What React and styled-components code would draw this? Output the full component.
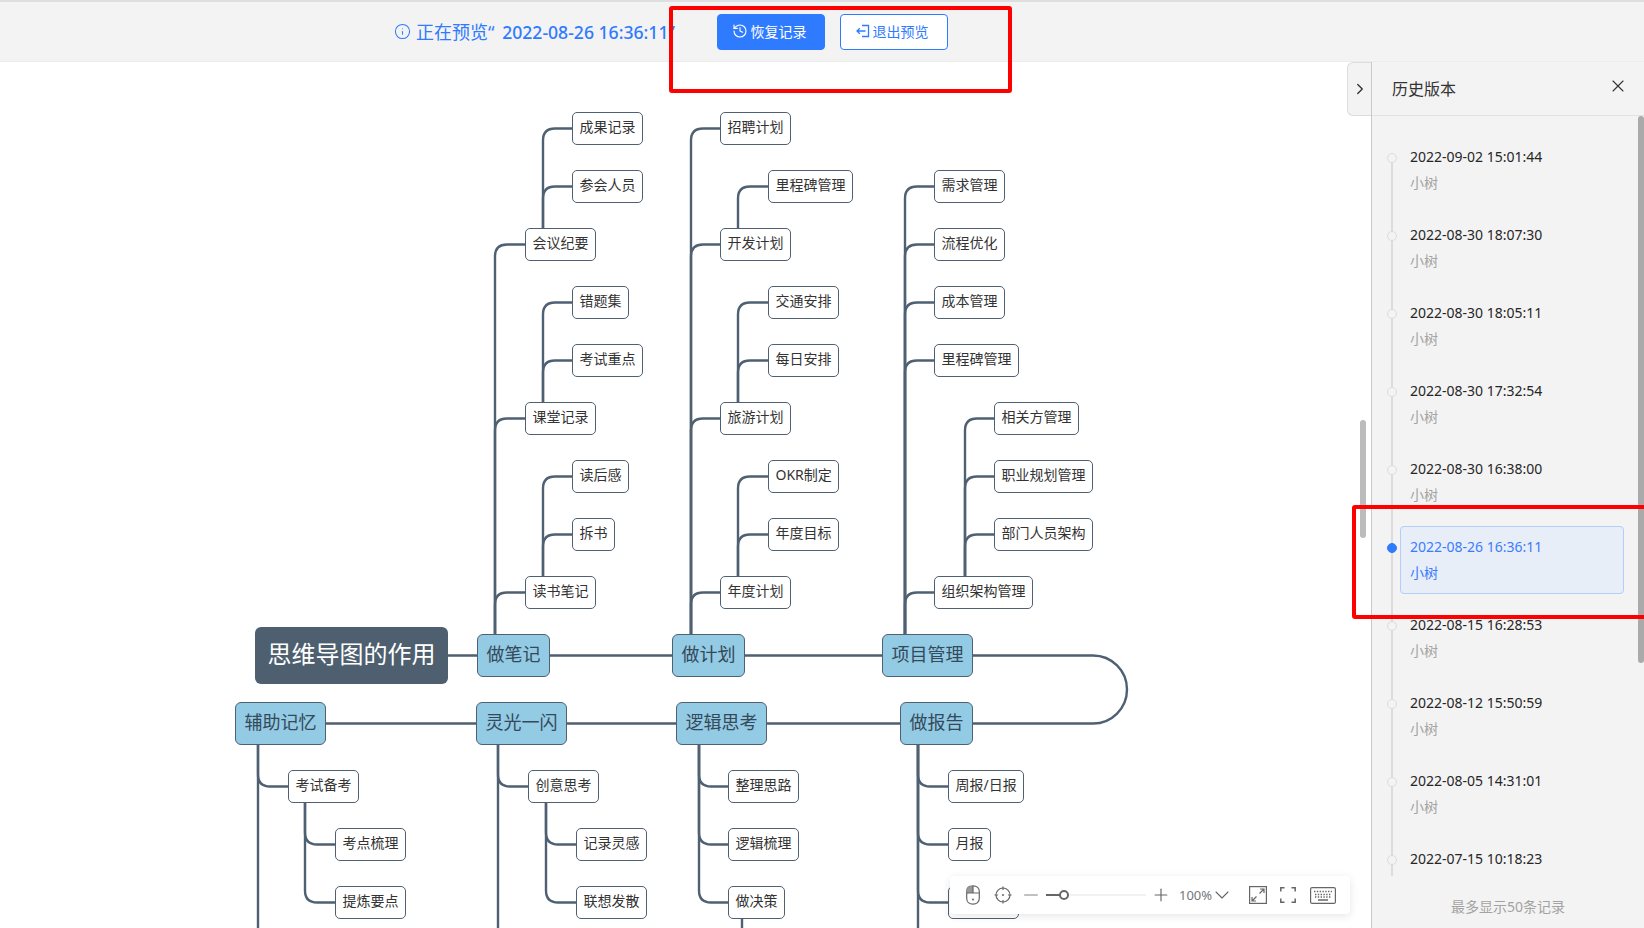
import React from "react";
import styled, { createGlobalStyle } from "styled-components";
import { ChevronDown, ChevronRight, History, Info, Minus, Plus, X } from "lucide-react";

const TOP = 62;
const LINE = "#4e6072";
const BLUE = "#2f7bff";

const GlobalStyle = createGlobalStyle`
  html, body {
    margin: 0;
    padding: 0;
    height: 100%;
    overflow: hidden;
    background: #fff;
    font-family: "Noto Sans", "Noto Sans CJK SC", sans-serif;
  }
  * {
    box-sizing: border-box;
  }
`;

const Page = styled.div`
  position: relative;
  width: 1644px;
  height: 928px;
  display: flex;
  flex-direction: column;
  overflow: hidden;
`;

const TopBar = styled.div`
  height: ${TOP}px;
  flex: none;
  display: flex;
  align-items: center;
  padding-left: 394px;
  background: #f3f3f3;
  border-top: 2px solid #dedede;
  border-bottom: 1px solid #ececec;
`;

const Notice = styled.div`
  width: 323px;
  padding-bottom: 1px;
  display: flex;
  align-items: center;
  gap: 5px;
  color: ${BLUE};
  font-size: 18px;
  white-space: nowrap;
`;

const NoticeDate = styled.span`
  margin-left: 3px;
  font-size: 17.6px;
  font-weight: 500;
`;

const Button = styled.button`
  width: 108px;
  height: 36px;
  margin-right: 15px;
  padding: 0 4px 2px 0;
  display: flex;
  align-items: center;
  justify-content: center;
  gap: 3px;
  border-radius: 4px;
  border: 1px solid ${BLUE};
  background: ${(p) => (p.$primary ? BLUE : "#fff")};
  color: ${(p) => (p.$primary ? "#fff" : BLUE)};
  font-family: inherit;
  font-size: 14px;
`;

const Body = styled.div`
  flex: 1;
  min-height: 0;
  display: flex;
`;

const Canvas = styled.div`
  position: relative;
  flex: 1;
  overflow: hidden;
  background: #fff;
`;

const Lines = styled.svg`
  position: absolute;
  left: 0;
  top: 0;
`;

const placed = (p) => ({ style: { left: p.$x, top: p.$y - TOP } });

const Topic = styled.div.attrs(placed)`
  position: absolute;
  height: 33px;
  padding: 0 6.5px 6px;
  display: flex;
  align-items: center;
  background: #fff;
  border: 1px solid ${LINE};
  border-radius: 5px;
  color: #333;
  font-size: 14px;
  white-space: nowrap;
`;

// the one topic whose label lies under the tool bar
const CoveredTopic = styled(Topic)`
  width: 71px;
`;

const MainTopic = styled.div.attrs(placed)`
  position: absolute;
  height: 43px;
  padding: 0 8.5px 6px;
  display: flex;
  align-items: center;
  background: #93cae4;
  border: 1.5px solid ${LINE};
  border-radius: 6px;
  color: #34495a;
  font-size: 18px;
  white-space: nowrap;
`;

const RootTopic = styled.div.attrs(placed)`
  position: absolute;
  height: 57px;
  padding: 0 12.5px 6px;
  display: flex;
  align-items: center;
  background: #4e5f6f;
  border-radius: 6px;
  color: #fff;
  font-size: 24px;
  white-space: nowrap;
`;

const CanvasScroll = styled.div`
  position: absolute;
  left: 1360px;
  top: ${420 - TOP}px;
  width: 6px;
  height: 118px;
  border-radius: 3px;
  background: #bcbcbc;
`;

const ToolBar = styled.div`
  position: absolute;
  left: 950px;
  bottom: 14px;
  width: 400px;
  height: 38px;
  padding-left: 16px;
  display: flex;
  align-items: center;
  background: #fff;
  border-radius: 4px;
  box-shadow: 0 2px 8px rgba(0, 0, 0, 0.1);
  color: #666;
`;

const Tool = styled.span`
  display: flex;
  align-items: center;
  margin-left: ${(p) => p.$gap || 0}px;
`;

const Zoom = styled.span`
  margin-left: 8px;
  width: 31px;
  color: #777;
  font-size: 13px;
  white-space: nowrap;
`;

const Track = styled.div`
  position: relative;
  width: 100px;
  height: 2px;
  margin-left: 4px;
  background: #f1f1f1;
`;

const TrackFill = styled.div`
  width: 18px;
  height: 2px;
  background: #666;
`;

const Knob = styled.div`
  position: absolute;
  left: 13px;
  top: -4px;
  width: 10px;
  height: 10px;
  border-radius: 50%;
  border: 2px solid #666;
  background: #fff;
`;

const Panel = styled.aside`
  position: relative;
  width: 273px;
  flex: none;
  display: flex;
  flex-direction: column;
  background: #f3f3f3;
  border-left: 1px solid #c9c9c9;
`;

const PanelHead = styled.div`
  height: 54px;
  flex: none;
  display: flex;
  align-items: center;
  justify-content: space-between;
  padding: 0 16px 1px 20px;
  border-bottom: 1px solid #e2e2e2;
  color: #333;
  font-size: 16px;
`;

const CloseIcon = styled(X)`
  margin-top: -4px;
`;

const Handle = styled.div`
  position: absolute;
  left: -25px;
  top: 0;
  width: 24px;
  height: 54px;
  display: flex;
  align-items: center;
  justify-content: center;
  background: #f3f3f3;
  border: 1px solid #dcdcdc;
  border-right: none;
  border-radius: 6px 0 0 6px;
  color: #333;
`;

const PanelScroll = styled.div`
  position: absolute;
  right: 0;
  top: 54px;
  width: 6px;
  height: 547px;
  border-radius: 3px;
  background: #aaa;
`;

const List = styled.div`
  flex: 1;
  min-height: 0;
  overflow: hidden;
  padding-top: 20px;
`;

const Item = styled.div`
  position: relative;
  height: 78px;
  padding-left: 28px;

  &::before {
    content: "";
    position: absolute;
    left: 19px;
    top: 0;
    bottom: 0;
    width: 2px;
    background: #dcdcdc;
  }
  &:first-child::before {
    top: 22px;
  }
`;

const Dot = styled.span`
  position: absolute;
  left: 15px;
  top: 17px;
  width: 10px;
  height: 10px;
  border-radius: 50%;
  background: ${(p) => (p.$active ? BLUE : "#f3f3f3")};
  border: 1px solid ${(p) => (p.$active ? BLUE : "#dcdcdc")};
`;

const Card = styled.div`
  width: 224px;
  height: 68px;
  padding: 7px 9px;
  border: 1px solid ${(p) => (p.$active ? "#b4cdfa" : "transparent")};
  border-radius: 4px;
  background: ${(p) => (p.$active ? "#e8eef7" : "transparent")};
`;

const When = styled.div`
  height: 26px;
  line-height: 26px;
  font-size: 14px;
  color: ${(p) => (p.$active ? "#3b7cff" : "#262626")};
`;

const Who = styled.div`
  height: 26px;
  line-height: 26px;
  font-size: 14px;
  color: ${(p) => (p.$active ? "#3b7cff" : "#a3a3a3")};
`;

const PanelFoot = styled.div`
  height: 52px;
  flex: none;
  padding-top: 8px;
  display: flex;
  align-items: center;
  justify-content: center;
  color: #a3a3a3;
  font-size: 14px;
`;

const RedBox = styled.div`
  position: absolute;
  border: 4px solid #ff0000;
  border-radius: 3px;
  pointer-events: none;
`;

const ButtonMark = styled(RedBox)`
  left: 669px;
  top: 6px;
  width: 343px;
  height: 87px;
`;

const RowMark = styled(RedBox)`
  left: 1352px;
  top: 505px;
  width: 300px;
  height: 114px;
`;

const topics = [
  ["成果记录", 572, 112], ["参会人员", 572, 170], ["会议纪要", 525, 228],
  ["错题集", 572, 286], ["考试重点", 572, 344], ["课堂记录", 525, 402],
  ["读后感", 572, 460], ["拆书", 572, 518], ["读书笔记", 525, 576],
  ["招聘计划", 720, 112], ["里程碑管理", 768, 170], ["开发计划", 720, 228],
  ["交通安排", 768, 286], ["每日安排", 768, 344], ["旅游计划", 720, 402],
  ["OKR制定", 768, 460], ["年度目标", 768, 518], ["年度计划", 720, 576],
  ["需求管理", 934, 170], ["流程优化", 934, 228], ["成本管理", 934, 286],
  ["里程碑管理", 934, 344], ["相关方管理", 994, 402], ["职业规划管理", 994, 460],
  ["部门人员架构", 994, 518], ["组织架构管理", 934, 576],
  ["考试备考", 288, 770], ["考点梳理", 335, 828], ["提炼要点", 335, 886],
  ["创意思考", 528, 770], ["记录灵感", 576, 828], ["联想发散", 576, 886],
  ["整理思路", 728, 770], ["逻辑梳理", 728, 828], ["做决策", 728, 886],
  ["周报/日报", 948, 770], ["月报", 948, 828],
];

const mainTopics = [
  ["做笔记", 477, 634], ["做计划", 672, 634], ["项目管理", 882, 634],
  ["辅助记忆", 235, 702], ["灵光一闪", 476, 702], ["逻辑思考", 676, 702], ["做报告", 900, 702],
];

// trunk x, start y, end x, row centres the trunk turns into
const branches = [
  [495, 634, 525, [244.5, 418.5, 592.5]],
  [543, 228, 572, [128.5, 186.5]],
  [543, 402, 572, [302.5, 360.5]],
  [543, 576, 572, [476.5, 534.5]],
  [691, 634, 720, [128.5, 244.5, 418.5, 592.5]],
  [738, 228, 768, [186.5]],
  [738, 402, 768, [302.5, 360.5]],
  [738, 576, 768, [476.5, 534.5]],
  [905, 634, 934, [186.5, 244.5, 302.5, 360.5, 592.5]],
  [965, 576, 994, [418.5, 476.5, 534.5]],
  [258, 745, 288, [786.5]],
  [305, 803, 335, [844.5, 902.5]],
  [498, 745, 528, [786.5]],
  [546, 803, 576, [844.5, 902.5]],
  [699, 745, 728, [786.5, 844.5, 902.5]],
  [918, 745, 948, [786.5, 844.5, 902.5]],
];

const straight = ["M258 745V928", "M498 745V928", "M918 745V928", "M742 919V928"];

const turn = (x, from, toX, y) => {
  const dir = y < from ? 1 : -1;
  return `M${x} ${from}V${y + dir * 12}Q${x} ${y} ${x + 12} ${y}H${toX}`;
};

const versions = [
  "2022-09-02 15:01:44", "2022-08-30 18:07:30", "2022-08-30 18:05:11",
  "2022-08-30 17:32:54", "2022-08-30 16:38:00", "2022-08-26 16:36:11",
  "2022-08-15 16:28:53", "2022-08-12 15:50:59", "2022-08-05 14:31:01",
  "2022-07-15 10:18:23",
];

const ExitIcon = () => (
  <svg width="14" height="14" viewBox="0 0 14 14" fill="none" stroke="currentColor" strokeWidth="1.3">
    <path d="M6 1.5h6.5v11H6" />
    <path d="M9.5 7H1M3.8 4.2 1 7l2.8 2.8" />
  </svg>
);

const MouseIcon = () => (
  <svg width="14" height="20" viewBox="0 0 14 20" fill="none" stroke="#666" strokeWidth="1.2">
    <path d="M7 .8C3 .8.7 3 .7 6.5v6.8c0 3.6 2.6 5.9 6.3 5.9s6.3-2.3 6.3-5.9V6.5C13.3 3 11 .8 7 .8Z" />
    <path d="M7 .8C3 .8.7 3 .7 6.5V8H7Z" fill="#999" stroke="none" />
    <path d="M.7 8h12.6M7 .8V8" />
    <circle cx="7" cy="14.5" r="1" fill="#666" stroke="none" />
  </svg>
);

const LocateIcon = () => (
  <svg width="18" height="18" viewBox="0 0 18 18" fill="none" stroke="#666" strokeWidth="1.2">
    <circle cx="9" cy="9" r="7" />
    <path d="M9 .5v3.5M9 14v3.5M.5 9H4M14 9h3.500" />
    <circle cx="9" cy="9" r="1" fill="#666" stroke="none" />
  </svg>
);

const ExpandIcon = () => (
  <svg width="18" height="18" viewBox="0 0 18 18" fill="none" stroke="#666" strokeWidth="1.2">
    <rect x=".6" y=".6" width="16.8" height="16.8" />
    <path d="M10.5 7.5 15 3M11 3h4v4M7.500 10.500 3 15M3 11v4h4" />
  </svg>
);

const FullIcon = () => (
  <svg width="16" height="16" viewBox="0 0 16 16" fill="none" stroke="#666" strokeWidth="1.5">
    <path d="M.8 4.500V.8h3.700M11.500.8h3.700v3.700M.8 11.500v3.700h3.700M11.500 15.200h3.700v-3.700" />
  </svg>
);

const KeyboardIcon = () => (
  <svg width="26" height="17" viewBox="0 0 26 17" fill="none" stroke="#666" strokeWidth="1.2">
    <rect x=".6" y=".6" width="24.8" height="15.8" rx="1.5" />
    <path d="M4 4.500h18M5 7.500h16M5 10h16" strokeWidth="1.4" strokeDasharray="1.4 1.4" />
    <path d="M8 13h10" strokeWidth="1.5" />
  </svg>
);

const MindMap = () => (
  <Canvas>
    <Lines width="1371" height="866" viewBox={`0 ${TOP} 1371 866`} fill="none" stroke={LINE} strokeWidth="2.4">
      <path d="M448 655.5H1093A34 34 0 0 1 1093 723.5H326" />
      {straight.map((d) => (
        <path key={d} d={d} />
      ))}
      {branches.map(([x, from, toX, rows]) =>
        rows.map((y) => <path key={`${x}-${from}-${y}`} d={turn(x, from, toX, y)} />)
      )}
    </Lines>
    <RootTopic $x={255} $y={627}>思维导图的作用</RootTopic>
    {mainTopics.map(([text, x, y]) => (
      <MainTopic key={text} $x={x} $y={y}>{text}</MainTopic>
    ))}
    {topics.map(([text, x, y]) => (
      <Topic key={`${text}-${x}`} $x={x} $y={y}>{text}</Topic>
    ))}
    <CoveredTopic $x={948} $y={886} />
    <CanvasScroll />
    <ToolBar>
      <Tool><MouseIcon /></Tool>
      <Tool $gap={14}><LocateIcon /></Tool>
      <Tool $gap={8}><Minus size={22} strokeWidth={1} color="#777" /></Tool>
      <Track>
        <TrackFill />
        <Knob />
      </Track>
      <Tool $gap={5}><Plus size={20} strokeWidth={1.4} /></Tool>
      <Zoom>100%</Zoom>
      <Tool><ChevronDown size={24} strokeWidth={1.1} /></Tool>
      <Tool $gap={15}><ExpandIcon /></Tool>
      <Tool $gap={13}><FullIcon /></Tool>
      <Tool $gap={14}><KeyboardIcon /></Tool>
    </ToolBar>
  </Canvas>
);

const HistoryPanel = () => (
  <Panel>
    <Handle><ChevronRight size={18} strokeWidth={1.8} /></Handle>
    <PanelHead>
      历史版本
      <CloseIcon size={20} strokeWidth={1.3} />
    </PanelHead>
    <PanelScroll />
    <List>
      {versions.map((when, i) => {
        const active = i === 5;
        return (
          <Item key={when}>
            <Dot $active={active} />
            <Card $active={active}>
              <When $active={active}>{when}</When>
              {i < versions.length - 1 && <Who $active={active}>小树</Who>}
            </Card>
          </Item>
        );
      })}
    </List>
    <PanelFoot>最多显示50条记录</PanelFoot>
  </Panel>
);

export default function App() {
  return (
    <Page>
      <GlobalStyle />
      <TopBar>
        <Notice>
          <Info size={17} strokeWidth={1.5} />
          <span>
            正在预览“ <NoticeDate>2022-08-26 16:36:11</NoticeDate>”
          </span>
        </Notice>
        <Button $primary>
          <History size={16} strokeWidth={1.7} />
          恢复记录
        </Button>
        <Button>
          <ExitIcon />
          退出预览
        </Button>
      </TopBar>
      <Body>
        <MindMap />
        <HistoryPanel />
      </Body>
      <ButtonMark />
      <RowMark />
    </Page>
  );
}
